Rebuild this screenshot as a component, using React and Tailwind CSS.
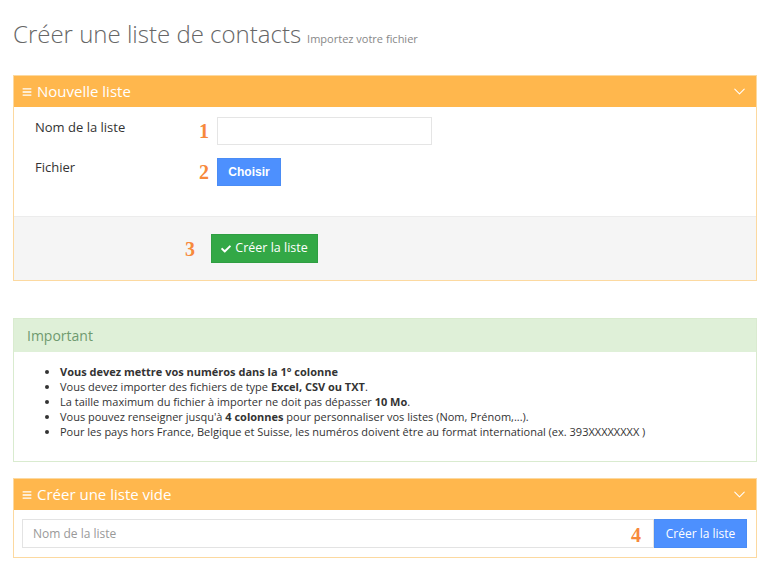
import React from 'react';
import { FaBars, FaCheck } from 'react-icons/fa';
import { ChevronDown } from 'lucide-react';

const font = { fontFamily: '"Open Sans", "Liberation Sans", Arial, sans-serif' };

const Step = ({ n, className = '' }) => (
    <span className={`font-['Liberation_Serif',serif] font-bold text-[20px] leading-none text-[#f7893b] ${className}`}>
        {n}
    </span>
);

const PanelHeader = ({ title }) => (
    <div className="h-[31px] bg-[#ffb74d] flex items-center justify-between pl-[8px] pr-[7px] text-white">
        <div className="flex items-center gap-[5px]">
            <FaBars className="w-[10px] h-[10px]" />
            <span className="text-[15px] leading-none">{title}</span>
        </div>
        <ChevronDown className="w-[19px] h-[19px]" strokeWidth={1.3} />
    </div>
);

const App = () => {
    return (
        <div className="min-h-screen bg-white px-[13px] pt-[22px] text-[#333]" style={font}>
            {/* Page title */}
            <div className="flex items-baseline gap-[6px] h-[30px]">
                <h1 className="text-[24px] font-light text-[#666] leading-none">Créer une liste de contacts</h1>
                <span className="text-[11px] text-[#888]">Importez votre fichier</span>
            </div>

            {/* Nouvelle liste */}
            <div className="mt-[23px] w-[744px] border border-[#fcd9a0]">
                <PanelHeader title="Nouvelle liste" />
                <div className="h-[109px] pt-[10px] pl-[21px]">
                    <div className="flex items-center h-[28px]">
                        <span className="w-[150px] text-[13px] text-[#333] -mt-[6px]">Nom de la liste</span>
                        <Step n="1" className="w-[24px] text-right" />
                        <input
                            type="text"
                            className="ml-[8px] w-[215px] h-[28px] border border-[#e5e5e5] bg-white outline-none"
                        />
                    </div>
                    <div className="flex items-center h-[28px] mt-[13px]">
                        <span className="w-[150px] text-[13px] text-[#333] -mt-[8px]">Fichier</span>
                        <Step n="2" className="w-[24px] text-right" />
                        <button
                            type="button"
                            className="ml-[8px] w-[64px] h-[28px] bg-[#4d90fe] border border-[#4a8cf5] text-white text-[12px] font-bold font-['Liberation_Sans',Arial,sans-serif]"
                        >
                            Choisir
                        </button>
                    </div>
                </div>
                <div className="h-[64px] bg-[#f5f5f5] border-t border-[#ececec] flex items-center pl-[171px]">
                    <Step n="3" />
                    <button
                        type="button"
                        className="ml-[16px] w-[107px] h-[29px] bg-[#33a846] border border-[#2f9e42] text-white text-[12.5px] flex items-center justify-center gap-[4px]"
                    >
                        <FaCheck className="w-[10px] h-[10px]" />
                        <span>Créer la liste</span>
                    </button>
                </div>
            </div>

            {/* Important */}
            <div className="mt-[37px] w-[744px] border border-[#d9ebcf]">
                <div className="h-[33px] bg-[#dff0d8] flex items-center pl-[13px] text-[14px] text-[#6f9a6f]">
                    Important
                </div>
                <ul className="list-disc pl-[46px] pt-[12px] pb-[22px] text-[11px] leading-[15px] text-[#333]">
                    <li><b>Vous devez mettre vos numéros dans la 1° colonne</b></li>
                    <li>Vous devez importer des fichiers de type <b>Excel, CSV ou TXT</b>.</li>
                    <li>La taille maximum du fichier à importer ne doit pas dépasser <b>10 Mo</b>.</li>
                    <li>Vous pouvez renseigner jusqu'à <b>4 colonnes</b> pour personnaliser vos listes (Nom, Prénom,...).</li>
                    <li>Pour les pays hors France, Belgique et Suisse, les numéros doivent être au format international (ex. 393XXXXXXXX )</li>
                </ul>
            </div>

            {/* Créer une liste vide */}
            <div className="mt-[16px] w-[744px] border border-[#fcd9a0]">
                <PanelHeader title="Créer une liste vide" />
                <div className="flex pl-[8px] pr-[9px] pt-[9px] pb-[9px]">
                    <div className="relative flex-1">
                        <input
                            type="text"
                            placeholder="Nom de la liste"
                            className="w-full h-[29px] border border-[#e3e3e3] pl-[10px] text-[12px] placeholder:text-[#999] outline-none"
                        />
                        <Step n="4" className="absolute right-[13px] top-[6px]" />
                    </div>
                    <button
                        type="button"
                        className="w-[93px] h-[29px] bg-[#4d90fe] border border-[#4a8cf5] text-white text-[12px]"
                    >
                        Créer la liste
                    </button>
                </div>
            </div>
        </div>
    );
};

export default App;
